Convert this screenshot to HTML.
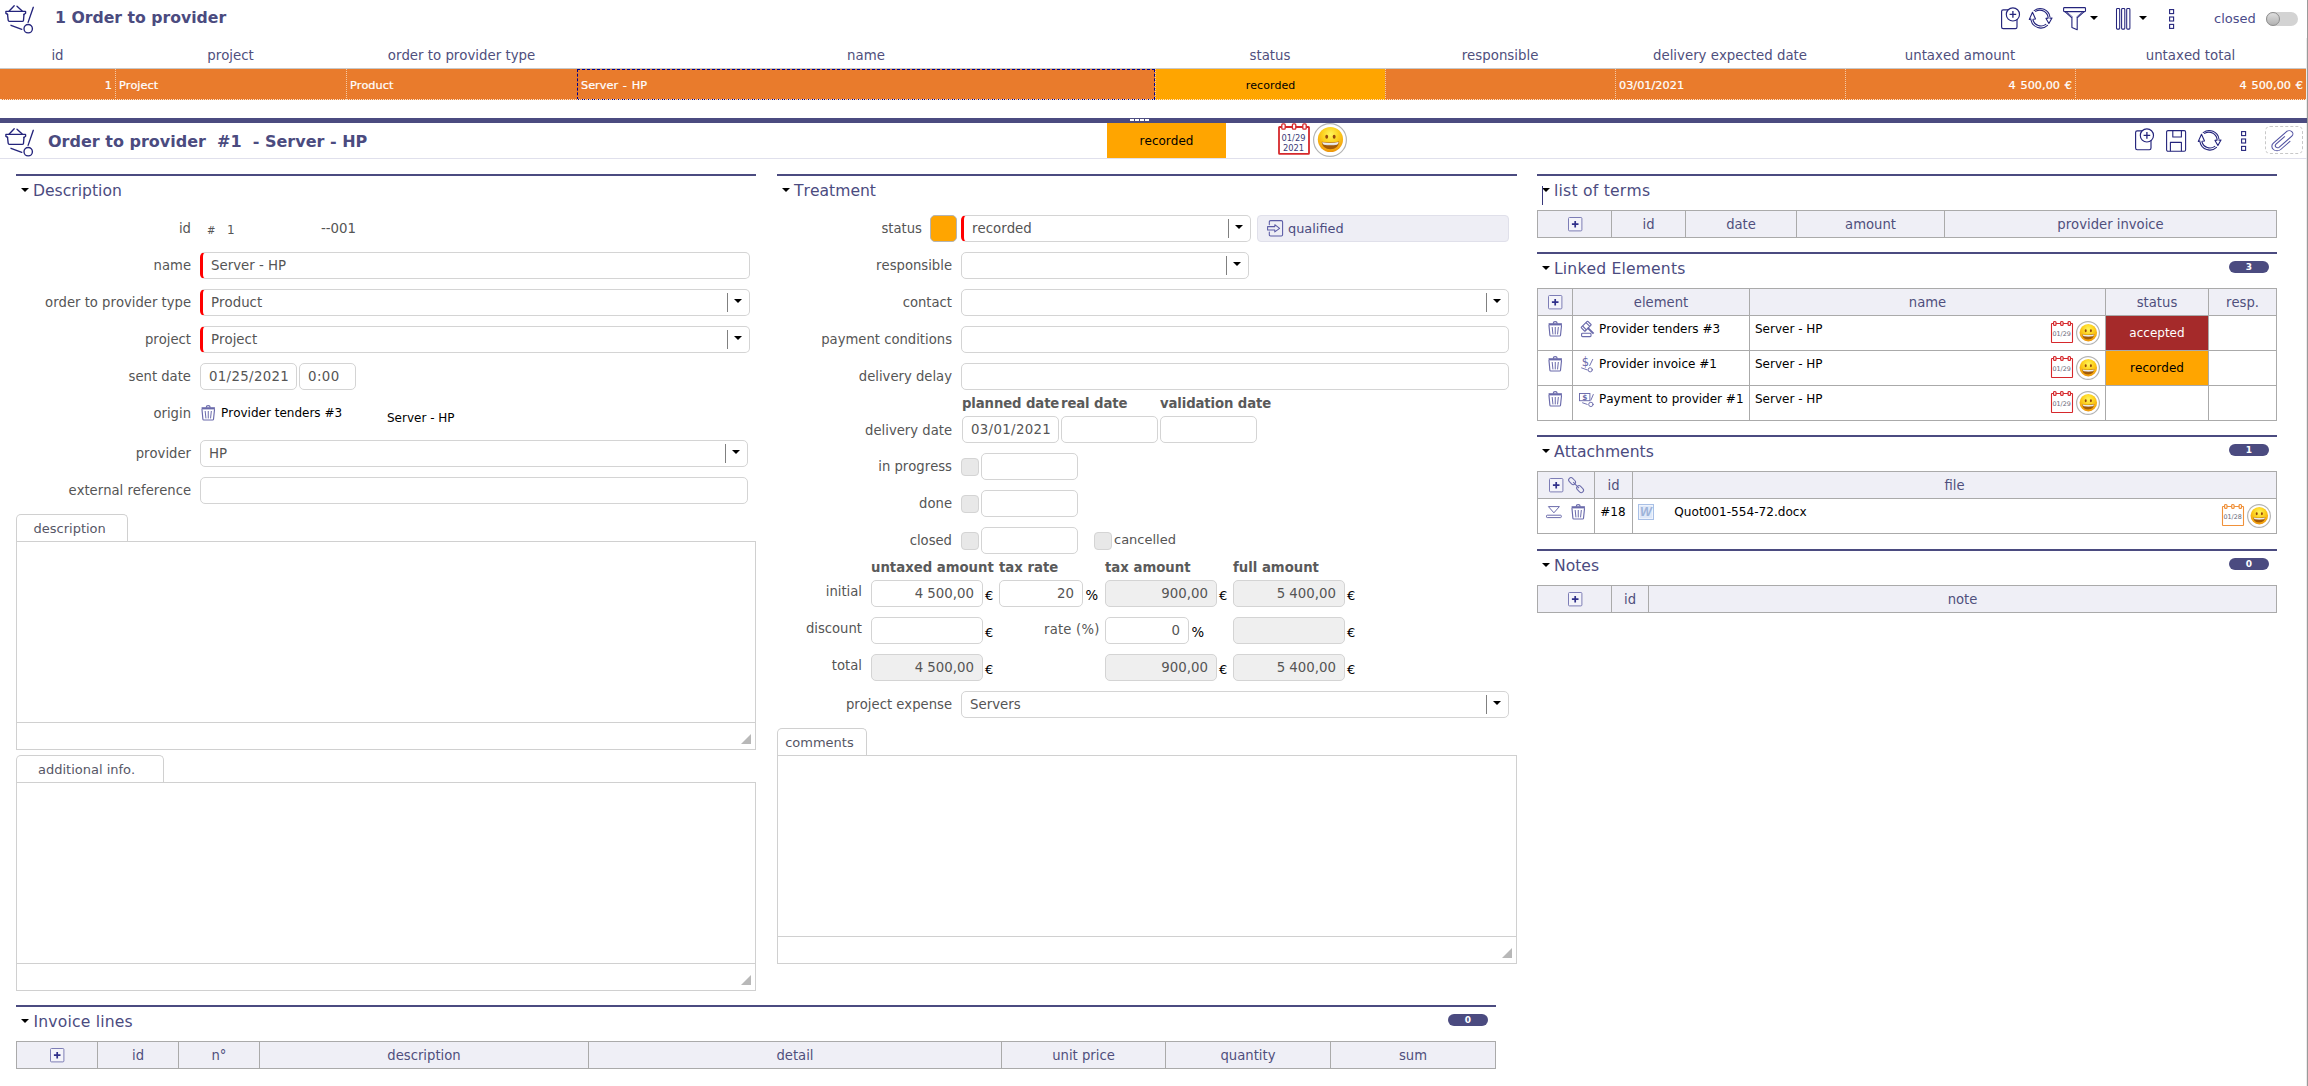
<!DOCTYPE html>
<html>
<head>
<meta charset="utf-8">
<title>Order to provider</title>
<style>
html,body{margin:0;padding:0;background:#fff;}
body{width:2308px;height:1086px;position:relative;overflow:hidden;font-family:"DejaVu Sans","Liberation Sans",sans-serif;font-size:13.33px;color:#555;font-kerning:none;}
.a{position:absolute;white-space:nowrap;}
.nv{color:#4b4b7f;}
svg{position:absolute;overflow:visible;}
/* list header */
.lh{top:47px;height:17px;line-height:17px;text-align:center;color:#4f4f7d;font-size:13.33px;}
.row{top:69px;height:31px;background:#e97b2c;}
.rc{top:69px;height:31px;line-height:33px;color:#fff;font-size:11.3px;font-weight:normal;-webkit-text-stroke:0.22px #fff;box-sizing:border-box;padding:0 3px 0 3px;word-spacing:1.2px;border-left:1px dotted #f3c9a6;}
/* sections */
.sl{height:2px;background:#4b4b80;}
.st{font-size:15.6px;color:#4b4b7f;height:20px;line-height:20px;margin-top:1px;}
.tri{width:0;height:0;border-left:4.2px solid transparent;border-right:4.2px solid transparent;border-top:4.6px solid #000;margin-left:-0.5px;}
.lb{text-align:right;height:18px;line-height:18px;color:#555;margin-top:1.4px;font-size:13.2px;}
.in{box-sizing:border-box;border:1px solid #d4d4d4;border-radius:5px;background:#fff;height:27px;line-height:25px;padding-left:8px;color:#555;}
.rq{border-left:3px solid #f00;padding-left:8px;}
.ro{background:#efefef;}
.num{text-align:right;padding-right:8px;padding-left:0;}
.sep{width:1px;background:#808080;height:19px;}
.cb{box-sizing:border-box;width:18px;height:18px;border:1px solid #d4d4d4;border-radius:4px;background:#e8e8e8;}
.bh{font-weight:bold;font-size:13.25px;color:#5a5a5a;}
.th{box-sizing:border-box;background:#efeff6;border:1px solid #aaa;height:28px;line-height:28px;font-size:13.2px;text-align:center;color:#4f4f7d;margin-left:-1px;}
.td{box-sizing:border-box;background:#fff;border:1px solid #aaa;margin-left:-1px;margin-top:-1px;color:#000;font-size:12px;}
.bd{background:#4b4b80;color:#fff;border-radius:6px;height:12px;line-height:12px;width:40px;text-align:center;font-size:9px;font-weight:bold;}
.tab{box-sizing:border-box;border:1px solid #d0d0d0;border-bottom:none;border-radius:5px 5px 0 0;background:#fff;height:27px;line-height:27px;text-align:left;color:#565666;font-size:13px;}
.ta{box-sizing:border-box;border:1px solid #d0d0d0;background:#fff;}
.tal{height:1px;background:#d0d0d0;}
.rt{font-size:12px;color:#000;height:16px;line-height:16px;margin-top:1px;}
.eu{color:#000;font-size:13px;height:16px;line-height:16px;}
.pc{font-size:13.3px;}
</style>
</head>
<body>
<div class="a" style="left:2306px;top:38px;width:1px;height:1048px;background:#ebebeb;"></div>
<!-- ===== LIST HEADER ===== -->
<div class="a" style="left:55px;top:7px;height:22px;line-height:22px;font-size:15.7px;font-weight:bold;color:#4b4b7f;">1 Order to provider</div>
<div class="a nv" style="left:2214px;top:9.6px;height:18px;line-height:18px;font-size:13px;color:#4b4b8a;">closed</div>
<div class="a" style="left:2266px;top:12px;width:32px;height:14px;border-radius:7px;background:#d3d3d3;"></div>
<div class="a" style="left:2266px;top:12px;width:14px;height:14px;border-radius:7px;box-sizing:border-box;border:1px solid #8e8e8e;background:linear-gradient(#dedede,#b2b2b2);"></div>

<div class="a lh" style="left:0;width:115px;">id</div>
<div class="a lh" style="left:115px;width:231px;">project</div>
<div class="a lh" style="left:346px;width:231px;">order to provider type</div>
<div class="a lh" style="left:577px;width:578px;">name</div>
<div class="a lh" style="left:1155px;width:230px;">status</div>
<div class="a lh" style="left:1385px;width:230px;">responsible</div>
<div class="a lh" style="left:1615px;width:230px;">delivery expected date</div>
<div class="a lh" style="left:1845px;width:230px;">untaxed amount</div>
<div class="a lh" style="left:2075px;width:231px;">untaxed total</div>

<div class="a" style="left:0;top:68px;width:2306px;height:1px;background:#c8c8c8;"></div>
<div class="a row" style="left:0;width:2306px;"></div>
<div class="a rc" style="left:0;width:115px;text-align:right;border-left:none;">1</div>
<div class="a rc" style="left:115px;width:231px;">Project</div>
<div class="a rc" style="left:346px;width:231px;">Product</div>
<div class="a rc" style="left:577px;width:578px;border:1px dashed #00008b;padding-left:3px;line-height:31px;">Server - HP</div>
<div class="a rc" style="left:1155px;width:230px;background:#ffa500;color:#000;font-weight:normal;-webkit-text-stroke:0;text-align:center;font-size:11px;">recorded</div>
<div class="a rc" style="left:1385px;width:230px;"></div>
<div class="a rc" style="left:1615px;width:230px;">03/01/2021</div>
<div class="a rc" style="left:1845px;width:230px;text-align:right;">4 500,00 €</div>
<div class="a rc" style="left:2075px;width:231px;text-align:right;">4 500,00 €</div>
<div class="a" style="left:0;top:99px;width:2306px;height:0;border-top:1px dotted #fbe6d3;"></div>

<!-- splitter -->
<div class="a" style="left:0;top:118px;width:2307px;height:5px;background:#4b4b80;"></div>
<div class="a" style="left:1130px;top:119px;width:20px;height:2px;background:repeating-linear-gradient(90deg,#fff 0,#fff 4px,transparent 4px,transparent 5px);"></div>

<!-- ===== DETAIL HEADER ===== -->
<div class="a" style="left:48px;top:130.6px;height:22px;line-height:22px;font-size:16px;font-weight:bold;color:#4b4b7f;white-space:pre;">Order to provider  #1  - Server - HP</div>
<div class="a" style="left:1107px;top:123px;width:119px;height:35px;line-height:37px;background:#ffa500;color:#000;text-align:center;font-size:12px;">recorded</div>
<div class="a" style="left:0;top:158px;width:2307px;height:1px;background:#e0e0ec;"></div>
<div class="a" style="left:2265px;top:126px;width:38px;height:28px;border:1px dashed #c8c8c8;border-radius:5px;box-sizing:border-box;"></div>

<!-- right edge -->
<div class="a" style="left:2307px;top:0;width:1px;height:1086px;background:#9a9a9a;"></div>

<!--COL1-->
<!-- ===== COLUMN 1 : Description ===== -->
<div class="a sl" style="left:16px;top:174px;width:740px;"></div>
<div class="a tri" style="left:21px;top:188px;"></div>
<div class="a st" style="left:33px;top:180px;">Description</div>

<div class="a lb" style="left:0;width:191px;top:219px;">id</div>
<div class="a" style="left:207px;top:221.7px;height:18px;line-height:18px;font-size:10px;color:#555;">#</div>
<div class="a" style="left:227px;top:220.7px;height:18px;line-height:18px;font-size:12px;color:#555;">1</div>
<div class="a" style="left:321px;top:220px;height:18px;line-height:18px;font-size:13.33px;color:#555;">--001</div>

<div class="a lb" style="left:0;width:191px;top:256px;">name</div>
<div class="a in rq" style="left:200px;top:252px;width:550px;">Server - HP</div>

<div class="a lb" style="left:0;width:191px;top:293px;">order to provider type</div>
<div class="a in rq" style="left:200px;top:289px;width:550px;">Product</div>
<div class="a sep" style="left:727px;top:293px;"></div>
<div class="a tri" style="left:734px;top:299px;"></div>

<div class="a lb" style="left:0;width:191px;top:330px;">project</div>
<div class="a in rq" style="left:200px;top:326px;width:550px;">Project</div>
<div class="a sep" style="left:727px;top:330px;"></div>
<div class="a tri" style="left:734px;top:336px;"></div>

<div class="a lb" style="left:0;width:191px;top:367px;">sent date</div>
<div class="a in" style="left:200px;top:363px;width:97px;letter-spacing:0.33px;">01/25/2021</div>
<div class="a in" style="left:299px;top:363px;width:57px;letter-spacing:0.4px;">0:00</div>

<div class="a lb" style="left:0;width:191px;top:404px;">origin</div>
<div class="a" style="left:221px;top:405px;height:16px;line-height:16px;font-size:12px;color:#000;">Provider tenders #3</div>
<div class="a" style="left:387px;top:410px;height:16px;line-height:16px;font-size:12px;color:#000;">Server - HP</div>

<div class="a lb" style="left:0;width:191px;top:444px;">provider</div>
<div class="a in" style="left:200px;top:440px;width:548px;">HP</div>
<div class="a sep" style="left:725px;top:444px;"></div>
<div class="a tri" style="left:732px;top:450px;"></div>

<div class="a lb" style="left:0;width:191px;top:481px;">external reference</div>
<div class="a in" style="left:200px;top:477px;width:548px;"></div>

<div class="a ta" style="left:16px;top:541px;width:740px;height:209px;"></div>
<div class="a tal" style="left:17px;top:722px;width:738px;"></div>
<div class="a tab" style="left:16px;top:514px;width:112px;padding-left:16.5px;">description</div>
<div class="a" style="left:742px;top:735px;width:0;height:0;border-left:10px solid transparent;border-bottom:10px solid #b8b8b8;margin-left:-1px;margin-top:-1px;"></div>

<div class="a ta" style="left:16px;top:782px;width:740px;height:209px;"></div>
<div class="a tal" style="left:17px;top:963px;width:738px;"></div>
<div class="a tab" style="left:16px;top:755px;width:148px;padding-left:21px;">additional info.</div>
<div class="a" style="left:742px;top:976px;width:0;height:0;border-left:10px solid transparent;border-bottom:10px solid #b8b8b8;margin-left:-1px;margin-top:-1px;"></div>
<!--/COL1-->
<!--COL2-->
<!-- ===== COLUMN 2 : Treatment ===== -->
<div class="a sl" style="left:777px;top:174px;width:740px;"></div>
<div class="a tri" style="left:782px;top:188px;"></div>
<div class="a st" style="left:794px;top:180px;">Treatment</div>

<div class="a lb" style="left:770px;width:152px;top:219px;">status</div>
<div class="a" style="left:930px;top:215px;width:27px;height:27px;box-sizing:border-box;border:1px solid #b4b4b4;border-radius:5px;background:#ffa500;"></div>
<div class="a in rq" style="left:961px;top:215px;width:290px;">recorded</div>
<div class="a sep" style="left:1228px;top:219px;"></div>
<div class="a tri" style="left:1235px;top:225px;"></div>
<div class="a" style="left:1257px;top:215px;width:252px;height:27px;box-sizing:border-box;border:1px solid #e0e0ea;border-radius:4px;background:#eeeef5;"></div>
<div class="a" style="left:1288px;top:219.5px;height:18px;line-height:18px;color:#4b4b7f;font-size:12.9px;">qualified</div>

<div class="a lb" style="left:770px;width:182px;top:256px;">responsible</div>
<div class="a in" style="left:961px;top:252px;width:288px;"></div>
<div class="a sep" style="left:1226px;top:256px;"></div>
<div class="a tri" style="left:1233px;top:262px;"></div>

<div class="a lb" style="left:770px;width:182px;top:293px;">contact</div>
<div class="a in" style="left:961px;top:289px;width:548px;"></div>
<div class="a sep" style="left:1486px;top:293px;"></div>
<div class="a tri" style="left:1493px;top:299px;"></div>

<div class="a lb" style="left:770px;width:182px;top:330px;">payment conditions</div>
<div class="a in" style="left:961px;top:326px;width:548px;"></div>

<div class="a lb" style="left:770px;width:182px;top:367px;">delivery delay</div>
<div class="a in" style="left:961px;top:363px;width:548px;"></div>

<div class="a bh" style="left:962px;top:396px;height:16px;line-height:16px;letter-spacing:-0.12px;">planned date</div>
<div class="a bh" style="left:1061px;top:396px;height:16px;line-height:16px;letter-spacing:-0.12px;">real date</div>
<div class="a bh" style="left:1160px;top:396px;height:16px;line-height:16px;letter-spacing:-0.12px;">validation date</div>

<div class="a lb" style="left:770px;width:182px;top:421px;">delivery date</div>
<div class="a in" style="left:962px;top:416px;width:97px;letter-spacing:0.33px;">03/01/2021</div>
<div class="a in" style="left:1061px;top:416px;width:97px;"></div>
<div class="a in" style="left:1160px;top:416px;width:97px;"></div>

<div class="a lb" style="left:770px;width:182px;top:457px;">in progress</div>
<div class="a cb" style="left:961px;top:458px;"></div>
<div class="a in" style="left:981px;top:453px;width:97px;"></div>

<div class="a lb" style="left:770px;width:182px;top:494px;">done</div>
<div class="a cb" style="left:961px;top:495px;"></div>
<div class="a in" style="left:981px;top:490px;width:97px;"></div>

<div class="a lb" style="left:770px;width:182px;top:531px;">closed</div>
<div class="a cb" style="left:961px;top:532px;"></div>
<div class="a in" style="left:981px;top:527px;width:97px;"></div>
<div class="a cb" style="left:1094px;top:532px;"></div>
<div class="a" style="left:1114px;top:531.3px;height:18px;line-height:18px;color:#555;font-size:13px;">cancelled</div>

<div class="a bh" style="left:871px;top:560px;height:16px;line-height:16px;">untaxed amount</div>
<div class="a bh" style="left:999px;top:560px;height:16px;line-height:16px;">tax rate</div>
<div class="a bh" style="left:1105px;top:560px;height:16px;line-height:16px;">tax amount</div>
<div class="a bh" style="left:1233px;top:560px;height:16px;line-height:16px;">full amount</div>

<div class="a lb" style="left:770px;width:92px;top:582px;">initial</div>
<div class="a in num" style="left:871px;top:580px;width:112px;">4 500,00</div>
<div class="a eu" style="left:985px;top:588px;">€</div>
<div class="a in num" style="left:999px;top:580px;width:84px;">20</div>
<div class="a eu pc" style="left:1085.5px;top:588px;">%</div>
<div class="a in num ro" style="left:1105px;top:580px;width:112px;">900,00</div>
<div class="a eu" style="left:1219px;top:588px;">€</div>
<div class="a in num ro" style="left:1233px;top:580px;width:112px;">5 400,00</div>
<div class="a eu" style="left:1347px;top:588px;">€</div>

<div class="a lb" style="left:770px;width:92px;top:619px;">discount</div>
<div class="a in num" style="left:871px;top:617px;width:112px;"></div>
<div class="a eu" style="left:985px;top:625px;">€</div>
<div class="a lb" style="left:1000px;width:99.5px;top:620px;letter-spacing:0.2px;">rate (%)</div>
<div class="a in num" style="left:1105px;top:617px;width:84px;">0</div>
<div class="a eu pc" style="left:1191.5px;top:625px;">%</div>
<div class="a in num ro" style="left:1233px;top:617px;width:112px;"></div>
<div class="a eu" style="left:1347px;top:625px;">€</div>

<div class="a lb" style="left:770px;width:92px;top:656px;">total</div>
<div class="a in num ro" style="left:871px;top:654px;width:112px;">4 500,00</div>
<div class="a eu" style="left:985px;top:662px;">€</div>
<div class="a in num ro" style="left:1105px;top:654px;width:112px;">900,00</div>
<div class="a eu" style="left:1219px;top:662px;">€</div>
<div class="a in num ro" style="left:1233px;top:654px;width:112px;">5 400,00</div>
<div class="a eu" style="left:1347px;top:662px;">€</div>

<div class="a lb" style="left:770px;width:182px;top:695px;">project expense</div>
<div class="a in" style="left:961px;top:691px;width:548px;">Servers</div>
<div class="a sep" style="left:1486px;top:695px;"></div>
<div class="a tri" style="left:1493px;top:701px;"></div>

<div class="a ta" style="left:777px;top:755px;width:740px;height:209px;"></div>
<div class="a tal" style="left:778px;top:936px;width:738px;"></div>
<div class="a tab" style="left:777px;top:728px;width:90px;padding-left:7.2px;">comments</div>
<div class="a" style="left:1503px;top:949px;width:0;height:0;border-left:10px solid transparent;border-bottom:10px solid #b8b8b8;margin-left:-1px;margin-top:-1px;"></div>
<!--/COL2-->
<!--COL3-->
<!-- ===== COLUMN 3 ===== -->
<div class="a sl" style="left:1537px;top:174px;width:740px;"></div>
<div class="a tri" style="left:1542.2px;top:188px;"></div>
<div class="a" style="left:1542px;top:186px;width:1px;height:19px;background:#38387a;"></div>
<div class="a st" style="left:1554px;top:180px;letter-spacing:0.23px;">list of terms</div>
<div class="a th" style="left:1537px;top:210px;width:76px;margin-left:0;"></div>
<div class="a th" style="left:1612px;top:210px;width:75px;">id</div>
<div class="a th" style="left:1686px;top:210px;width:112px;">date</div>
<div class="a th" style="left:1797px;top:210px;width:149px;">amount</div>
<div class="a th" style="left:1945px;top:210px;width:333px;">provider invoice</div>

<div class="a sl" style="left:1537px;top:252px;width:740px;"></div>
<div class="a tri" style="left:1542.2px;top:266px;"></div>
<div class="a st" style="left:1554px;top:258px;letter-spacing:0.16px;">Linked Elements</div>
<div class="a bd" style="left:2229px;top:261px;">3</div>

<div class="a th" style="left:1537px;top:288px;width:37px;margin-left:0;"></div>
<div class="a th" style="left:1573px;top:288px;width:178px;">element</div>
<div class="a th" style="left:1750px;top:288px;width:357px;">name</div>
<div class="a th" style="left:2106px;top:288px;width:104px;">status</div>
<div class="a th" style="left:2209px;top:288px;width:69px;">resp.</div>

<div class="a td" style="left:1537px;top:316px;width:37px;height:36px;margin-left:0;"></div>
<div class="a td" style="left:1573px;top:316px;width:178px;height:36px;"></div>
<div class="a td" style="left:1750px;top:316px;width:357px;height:36px;"></div>
<div class="a td" style="left:2106px;top:316px;width:104px;height:36px;"></div>
<div class="a td" style="left:2209px;top:316px;width:69px;height:36px;"></div>
<div class="a td" style="left:1537px;top:351px;width:37px;height:36px;margin-left:0;"></div>
<div class="a td" style="left:1573px;top:351px;width:178px;height:36px;"></div>
<div class="a td" style="left:1750px;top:351px;width:357px;height:36px;"></div>
<div class="a td" style="left:2106px;top:351px;width:104px;height:36px;"></div>
<div class="a td" style="left:2209px;top:351px;width:69px;height:36px;"></div>
<div class="a td" style="left:1537px;top:386px;width:37px;height:36px;margin-left:0;"></div>
<div class="a td" style="left:1573px;top:386px;width:178px;height:36px;"></div>
<div class="a td" style="left:1750px;top:386px;width:357px;height:36px;"></div>
<div class="a td" style="left:2106px;top:386px;width:104px;height:36px;"></div>
<div class="a td" style="left:2209px;top:386px;width:69px;height:36px;"></div>

<div class="a" style="left:2106px;top:316px;width:102px;height:34px;line-height:34px;background:#a52a2a;color:#fff;text-align:center;font-size:12px;">accepted</div>
<div class="a" style="left:2106px;top:351px;width:102px;height:34px;line-height:34px;background:#ffa500;color:#000;text-align:center;font-size:12px;">recorded</div>

<div class="a rt" style="left:1599px;top:320px;">Provider tenders #3</div>
<div class="a rt" style="left:1599px;top:355px;">Provider invoice #1</div>
<div class="a rt" style="left:1599px;top:390px;">Payment to provider #1</div>
<div class="a rt" style="left:1755px;top:320px;">Server - HP</div>
<div class="a rt" style="left:1755px;top:355px;">Server - HP</div>
<div class="a rt" style="left:1755px;top:390px;">Server - HP</div>

<div class="a sl" style="left:1537px;top:435px;width:740px;"></div>
<div class="a tri" style="left:1542.2px;top:449px;"></div>
<div class="a st" style="left:1554px;top:441px;">Attachments</div>
<div class="a bd" style="left:2229px;top:444px;">1</div>

<div class="a th" style="left:1537px;top:471px;width:59px;margin-left:0;"></div>
<div class="a th" style="left:1595px;top:471px;width:39px;">id</div>
<div class="a th" style="left:1633px;top:471px;width:645px;">file</div>
<div class="a td" style="left:1537px;top:499px;width:59px;height:36px;margin-left:0;"></div>
<div class="a td" style="left:1595px;top:499px;width:39px;height:36px;"></div>
<div class="a td" style="left:1633px;top:499px;width:645px;height:36px;"></div>
<div class="a rt" style="left:1600.3px;top:503px;">#18</div>
<div class="a rt" style="left:1674.3px;top:503px;font-size:12.1px;">Quot001-554-72.docx</div>

<div class="a sl" style="left:1537px;top:549px;width:740px;"></div>
<div class="a tri" style="left:1542.2px;top:563px;"></div>
<div class="a st" style="left:1554px;top:555px;">Notes</div>
<div class="a bd" style="left:2229px;top:558px;">0</div>
<div class="a th" style="left:1537px;top:585px;width:76px;margin-left:0;"></div>
<div class="a th" style="left:1612px;top:585px;width:38px;">id</div>
<div class="a th" style="left:1649px;top:585px;width:629px;">note</div>
<!--/COL3-->
<!--BOTTOM-->
<!-- ===== Invoice lines ===== -->
<div class="a sl" style="left:16px;top:1005px;width:1480px;"></div>
<div class="a tri" style="left:21px;top:1019px;"></div>
<div class="a st" style="left:33.5px;top:1011px;letter-spacing:0.18px;">Invoice lines</div>
<div class="a bd" style="left:1448px;top:1014px;">0</div>
<div class="a th" style="left:16px;top:1041px;width:82px;margin-left:0;"></div>
<div class="a th" style="left:98px;top:1041px;width:82px;">id</div>
<div class="a th" style="left:179px;top:1041px;width:82px;">n°</div>
<div class="a th" style="left:260px;top:1041px;width:330px;">description</div>
<div class="a th" style="left:589px;top:1041px;width:414px;">detail</div>
<div class="a th" style="left:1002px;top:1041px;width:165px;">unit price</div>
<div class="a th" style="left:1166px;top:1041px;width:166px;">quantity</div>
<div class="a th" style="left:1331px;top:1041px;width:166px;">sum</div>
<!--/BOTTOM-->
<!--ICONS-->
<!-- ===== ICONS ===== -->
<svg style="left:4.6px;top:5px" width="34" height="30" viewBox="0 0 34 30" ><g fill="none" stroke="#24247c" stroke-width="1.35" stroke-linecap="round" stroke-linejoin="round"><path d="M4.2 6 L9.2 0.8 M12 1.2 L17.2 6"/><path d="M0.9 6.3 H20.4 M0.9 6.3 V8.4 L2.6 9.3 M20.6 6.6 V8.2 L18.9 9.5"/><path d="M2.5 9.2 L3.2 15.3 Q3.3 16.4 4.4 16.4 H17.2 Q18.3 16.4 18.5 15.3 L19 9.3"/><path d="M28.3 2.3 L23.1 17.4"/><path d="M6 20.3 L16.8 24.3"/><circle cx="23.2" cy="23.7" r="4.2"/></g></svg>
<svg style="left:4.6px;top:127.7px" width="34" height="30" viewBox="0 0 34 30" ><g fill="none" stroke="#24247c" stroke-width="1.35" stroke-linecap="round" stroke-linejoin="round"><path d="M4.2 6 L9.2 0.8 M12 1.2 L17.2 6"/><path d="M0.9 6.3 H20.4 M0.9 6.3 V8.4 L2.6 9.3 M20.6 6.6 V8.2 L18.9 9.5"/><path d="M2.5 9.2 L3.2 15.3 Q3.3 16.4 4.4 16.4 H17.2 Q18.3 16.4 18.5 15.3 L19 9.3"/><path d="M28.3 2.3 L23.1 17.4"/><path d="M6 20.3 L16.8 24.3"/><circle cx="23.2" cy="23.7" r="4.2"/></g></svg>
<svg style="left:2000.6px;top:6.5px" width="20" height="24" viewBox="0 0 20 24" ><g fill="none" stroke="#24247c" stroke-width="1.15" stroke-linejoin="round"><rect x="0.6" y="2.8" width="15.4" height="18.9" rx="1.6"/><circle cx="11.9" cy="7.4" r="6.6" fill="#fff"/><path d="M8.6 7.4 H15.2 M11.9 4.1 V10.7" stroke-width="1.3"/></g></svg>
<svg style="left:2134.7px;top:128.4px" width="20" height="24" viewBox="0 0 20 24" ><g fill="none" stroke="#24247c" stroke-width="1.15" stroke-linejoin="round"><rect x="0.6" y="2.8" width="15.4" height="18.9" rx="1.6"/><circle cx="11.9" cy="7.4" r="6.6" fill="#fff"/><path d="M8.6 7.4 H15.2 M11.9 4.1 V10.7" stroke-width="1.3"/></g></svg>
<svg style="left:2029px;top:7.3px" width="24" height="22" viewBox="0 0 24 22" ><g fill="none" stroke="#24247c" stroke-width="1.1" stroke-linejoin="round" stroke-linecap="round"><path d="M5.2 3.6 A9.9 9.9 0 0 1 21.0 10.2"/><path d="M6.6 4.4 A8.3 8.3 0 0 1 19.1 10.4"/><path d="M17.0 11.4 L19.9 16.6 L23.0 11.0 L21.0 11.3 M17.0 11.4 L19.1 11.1"/><path d="M18.5 18.3 A9.9 9.9 0 0 1 2.0 13.2"/><path d="M16.8 17.4 A8.3 8.3 0 0 1 4.0 13.0"/><path d="M6.5 12.0 L3.5 5.2 L0.3 12.4 L2.0 12.1 M6.5 12.0 L4.0 12.2"/></g></svg>
<svg style="left:2198.4px;top:129.3px" width="24" height="22" viewBox="0 0 24 22" ><g fill="none" stroke="#24247c" stroke-width="1.1" stroke-linejoin="round" stroke-linecap="round"><path d="M5.2 3.6 A9.9 9.9 0 0 1 21.0 10.2"/><path d="M6.6 4.4 A8.3 8.3 0 0 1 19.1 10.4"/><path d="M17.0 11.4 L19.9 16.6 L23.0 11.0 L21.0 11.3 M17.0 11.4 L19.1 11.1"/><path d="M18.5 18.3 A9.9 9.9 0 0 1 2.0 13.2"/><path d="M16.8 17.4 A8.3 8.3 0 0 1 4.0 13.0"/><path d="M6.5 12.0 L3.5 5.2 L0.3 12.4 L2.0 12.1 M6.5 12.0 L4.0 12.2"/></g></svg>
<svg style="left:2062.5px;top:6.7px" width="24" height="24" viewBox="0 0 24 24" ><g fill="none" stroke="#24247c" stroke-width="1.1" stroke-linejoin="round"><rect x="0.6" y="0.6" width="21.9" height="4.0" rx="0.8"/><path d="M2.2 4.8 L8.9 10.8 V20.4 L14.2 22.8 V10.8 L20.9 4.8"/><path d="M3.6 4.8 L9.9 10.3 M19.5 4.8 L13.3 10.3" stroke-width="0.7"/></g></svg>
<div class="a" style="left:2089.5px;top:16px;width:0;height:0;border-left:4.2px solid transparent;border-right:4.2px solid transparent;border-top:4.6px solid #000;"></div>
<svg style="left:2115.5px;top:8px" width="15" height="22" viewBox="0 0 15 22" ><g fill="none" stroke="#24247c" stroke-width="1.05"><rect x="0.5" y="0.5" width="3.2" height="20.6" rx="0.9"/><rect x="5.6" y="0.5" width="3.2" height="20.6" rx="0.9"/><rect x="10.7" y="0.5" width="3.2" height="20.6" rx="0.9"/></g></svg>
<div class="a" style="left:2138.5px;top:16px;width:0;height:0;border-left:4.2px solid transparent;border-right:4.2px solid transparent;border-top:4.6px solid #000;"></div>
<svg style="left:2169px;top:9.2px" width="6" height="21" viewBox="0 0 6 21" ><g fill="none" stroke="#24247c" stroke-width="1.1"><rect x="0.6" y="0.6" width="4" height="4"/><rect x="0.6" y="8" width="4" height="4"/><rect x="0.6" y="15.4" width="4" height="4"/></g></svg>
<svg style="left:2241px;top:130.8px" width="6" height="21" viewBox="0 0 6 21" ><g fill="none" stroke="#24247c" stroke-width="1.1"><rect x="0.6" y="0.6" width="4" height="4"/><rect x="0.6" y="8" width="4" height="4"/><rect x="0.6" y="15.4" width="4" height="4"/></g></svg>
<svg style="left:2166px;top:130px" width="21" height="22" viewBox="0 0 21 22" ><g fill="none" stroke="#24247c" stroke-width="1.1" stroke-linejoin="round"><rect x="0.6" y="0.6" width="19" height="20.6" rx="1.4"/><path d="M6.8 0.6 V7 H15.4 V0.6"/><path d="M4.4 21.2 V12.4 H15.4 V21.2"/></g></svg>
<svg style="left:2270.5px;top:128.5px" width="24" height="24" viewBox="0 0 24 24" ><g fill="none" stroke="#5252a2" stroke-width="1.05" stroke-linecap="round" stroke-linejoin="round"><path d="M13.2 7.2 L4.6 15.8 A2.3 2.3 0 0 0 7.8 19 L20.2 6.6 A3.6 3.6 0 0 0 15.1 1.5 L2.3 14.3 A5 5 0 0 0 9.4 21.4 L18.4 12.4" transform="translate(0,1.2) scale(1.03,0.9)"/></g></svg>
<svg style="left:1568px;top:217px" width="15" height="15" viewBox="0 0 15 15" ><rect x="0.5" y="0.5" width="13.4" height="13.4" rx="1" fill="#f4f4fa" stroke="#7d7db6" stroke-width="1"/><path d="M3.9 7.2 H10.5 M7.2 3.9 V10.5" stroke="#30308a" stroke-width="1.7" fill="none"/></svg>
<svg style="left:1548px;top:295px" width="15" height="15" viewBox="0 0 15 15" ><rect x="0.5" y="0.5" width="13.4" height="13.4" rx="1" fill="#f4f4fa" stroke="#7d7db6" stroke-width="1"/><path d="M3.9 7.2 H10.5 M7.2 3.9 V10.5" stroke="#30308a" stroke-width="1.7" fill="none"/></svg>
<svg style="left:1548.6px;top:477.8px" width="15" height="15" viewBox="0 0 15 15" ><rect x="0.5" y="0.5" width="13.4" height="13.4" rx="1" fill="#f4f4fa" stroke="#7d7db6" stroke-width="1"/><path d="M3.9 7.2 H10.5 M7.2 3.9 V10.5" stroke="#30308a" stroke-width="1.7" fill="none"/></svg>
<svg style="left:1568px;top:592px" width="15" height="15" viewBox="0 0 15 15" ><rect x="0.5" y="0.5" width="13.4" height="13.4" rx="1" fill="#f4f4fa" stroke="#7d7db6" stroke-width="1"/><path d="M3.9 7.2 H10.5 M7.2 3.9 V10.5" stroke="#30308a" stroke-width="1.7" fill="none"/></svg>
<svg style="left:50px;top:1048px" width="15" height="15" viewBox="0 0 15 15" ><rect x="0.5" y="0.5" width="13.4" height="13.4" rx="1" fill="#f4f4fa" stroke="#7d7db6" stroke-width="1"/><path d="M3.9 7.2 H10.5 M7.2 3.9 V10.5" stroke="#30308a" stroke-width="1.7" fill="none"/></svg>
<svg style="left:1548px;top:321px" width="15" height="16" viewBox="0 0 15 16" ><g fill="none" stroke="#6a6aab" stroke-linecap="round" stroke-linejoin="round"><path d="M5.3 2.2 Q5.3 0.6 7.2 0.6 Q9.1 0.6 9.1 2.2" stroke-width="1.2"/><path d="M0.6 3.3 H13.9" stroke-width="2.2" stroke-linecap="butt"/><path d="M1 4.6 L1.9 14.2 Q2 15 2.8 15 H11.6 Q12.4 15 12.5 14.2 L13.5 4.6" stroke-width="1.15"/><path d="M4.2 6.4 L4.9 13 M7.25 6.4 V13 M10.3 6.4 L9.6 13" stroke-width="1"/></g></svg>
<svg style="left:1548px;top:356px" width="15" height="16" viewBox="0 0 15 16" ><g fill="none" stroke="#6a6aab" stroke-linecap="round" stroke-linejoin="round"><path d="M5.3 2.2 Q5.3 0.6 7.2 0.6 Q9.1 0.6 9.1 2.2" stroke-width="1.2"/><path d="M0.6 3.3 H13.9" stroke-width="2.2" stroke-linecap="butt"/><path d="M1 4.6 L1.9 14.2 Q2 15 2.8 15 H11.6 Q12.4 15 12.5 14.2 L13.5 4.6" stroke-width="1.15"/><path d="M4.2 6.4 L4.9 13 M7.25 6.4 V13 M10.3 6.4 L9.6 13" stroke-width="1"/></g></svg>
<svg style="left:1548px;top:391px" width="15" height="16" viewBox="0 0 15 16" ><g fill="none" stroke="#6a6aab" stroke-linecap="round" stroke-linejoin="round"><path d="M5.3 2.2 Q5.3 0.6 7.2 0.6 Q9.1 0.6 9.1 2.2" stroke-width="1.2"/><path d="M0.6 3.3 H13.9" stroke-width="2.2" stroke-linecap="butt"/><path d="M1 4.6 L1.9 14.2 Q2 15 2.8 15 H11.6 Q12.4 15 12.5 14.2 L13.5 4.6" stroke-width="1.15"/><path d="M4.2 6.4 L4.9 13 M7.25 6.4 V13 M10.3 6.4 L9.6 13" stroke-width="1"/></g></svg>
<svg style="left:1571px;top:504px" width="15" height="16" viewBox="0 0 15 16" ><g fill="none" stroke="#6a6aab" stroke-linecap="round" stroke-linejoin="round"><path d="M5.3 2.2 Q5.3 0.6 7.2 0.6 Q9.1 0.6 9.1 2.2" stroke-width="1.2"/><path d="M0.6 3.3 H13.9" stroke-width="2.2" stroke-linecap="butt"/><path d="M1 4.6 L1.9 14.2 Q2 15 2.8 15 H11.6 Q12.4 15 12.5 14.2 L13.5 4.6" stroke-width="1.15"/><path d="M4.2 6.4 L4.9 13 M7.25 6.4 V13 M10.3 6.4 L9.6 13" stroke-width="1"/></g></svg>
<svg style="left:201px;top:405px" width="15" height="16" viewBox="0 0 15 16" ><g fill="none" stroke="#6a6aab" stroke-linecap="round" stroke-linejoin="round"><path d="M5.3 2.2 Q5.3 0.6 7.2 0.6 Q9.1 0.6 9.1 2.2" stroke-width="1.2"/><path d="M0.6 3.3 H13.9" stroke-width="2.2" stroke-linecap="butt"/><path d="M1 4.6 L1.9 14.2 Q2 15 2.8 15 H11.6 Q12.4 15 12.5 14.2 L13.5 4.6" stroke-width="1.15"/><path d="M4.2 6.4 L4.9 13 M7.25 6.4 V13 M10.3 6.4 L9.6 13" stroke-width="1"/></g></svg>
<svg style="left:1579.6px;top:321px" width="16" height="17" viewBox="0 0 16 17" ><g fill="none" stroke="#6a6aab" stroke-width="1.1" stroke-linejoin="round"><g transform="translate(6.2,5.2) rotate(-45)"><rect x="-4.6" y="-2.7" width="9.2" height="5.4" rx="0.5"/><path d="M-2.4 -2.7 V2.7 M2.4 -2.7 V2.7"/></g><path d="M7.6 6.8 L13.6 12.6" stroke-width="1.9"/><rect x="1.6" y="12.2" width="9.4" height="3.4" rx="0.9"/></g></svg>
<svg style="left:1580.8px;top:356.8px" width="14" height="16" viewBox="0 0 14 16" ><g fill="none" stroke="#6a6aab" stroke-width="0.95" stroke-linecap="round"><path d="M11.7 2.4 L8.7 8.6"/><path d="M0.6 10.9 L6.2 12.9"/><circle cx="9.2" cy="12.8" r="2.1"/></g><text x="0.7" y="9.4" font-family="DejaVu Sans,sans-serif" font-size="11.5" fill="#6a6aab">$</text></svg>
<svg style="left:1578.8px;top:392.8px" width="16" height="15" viewBox="0 0 16 15" ><g fill="none" stroke="#6a6aab" stroke-width="0.95" stroke-linecap="round"><rect x="0.5" y="0.5" width="10.4" height="7.2"/><path d="M14.3 1.5 L11.9 7.2"/><path d="M3.6 9.8 L8.2 11.4"/><circle cx="11.9" cy="11.4" r="2.2"/></g><text x="3.3" y="7" font-family="DejaVu Sans,sans-serif" font-size="7.5" font-weight="bold" fill="#6a6aab">$</text></svg>
<svg style="left:1567.9px;top:476.8px" width="17" height="17" viewBox="0 0 17 17" ><g fill="none" stroke="#6a6aab" stroke-width="1.1" transform="translate(8.1,8.1) rotate(45) scale(0.9)"><rect x="-10.6" y="-2.6" width="8.6" height="5.2" rx="2.6"/><rect x="2" y="-2.6" width="8.6" height="5.2" rx="2.6"/><path d="M-4.6 0 H4.6"/></g></svg>
<svg style="left:1546.2px;top:506.2px" width="16" height="13" viewBox="0 0 16 13" ><g fill="none" stroke="#6a6aab" stroke-width="1" stroke-linejoin="round"><path d="M2.4 0.6 H13.4 L7.9 6.8 Z"/><rect x="0.5" y="9.2" width="14.8" height="2.4" rx="0.8"/></g></svg>
<svg style="left:1267.1px;top:219.7px" width="17" height="17" viewBox="0 0 17 17" ><g fill="none" stroke="#5a5aa5" stroke-width="1.05" stroke-linejoin="round" stroke-linecap="round"><path d="M2.3 4.6 V1.9 Q2.3 0.6 3.6 0.6 H14.3 Q15.6 0.6 15.6 1.9 V14.7 Q15.6 16 14.3 16 H3.6 Q2.3 16 2.3 14.7 V12"/><path d="M0.6 6.6 H7.8 V4.7 L12.6 8.3 L7.8 11.9 V10 H0.6 Z"/></g></svg>
<svg style="left:1638px;top:504px" width="16" height="16" viewBox="0 0 16 16" ><rect x="0.5" y="0.5" width="15" height="15" fill="#dfe8f8" stroke="#a9c0e6" stroke-width="1"/><rect x="1.5" y="1.5" width="13" height="13" fill="none" stroke="#eef3fc" stroke-width="1"/><text x="8" y="12.3" text-anchor="middle" font-family="Liberation Sans,sans-serif" font-style="italic" font-weight="bold" font-size="12.5" fill="#9db3d9">W</text></svg>
<svg style="left:2050px;top:320px" width="24" height="24" viewBox="0 0 24 24" ><rect x="1.5" y="3.5" width="21" height="19" rx="0.5" fill="#fff" stroke="#d6282c" stroke-width="1.1"/><rect x="3.5999999999999996" y="1.5" width="2.4" height="3.8" rx="0.9" fill="#fff" stroke="#d6282c" stroke-width="1.2"/><rect x="10.700000000000001" y="1.5" width="2.4" height="3.8" rx="0.9" fill="#fff" stroke="#d6282c" stroke-width="1.2"/><rect x="18.1" y="1.5" width="2.4" height="3.8" rx="0.9" fill="#fff" stroke="#d6282c" stroke-width="1.2"/><text x="11.6" y="15.9" text-anchor="middle" font-family="DejaVu Sans,sans-serif" font-size="6.4" fill="#666677">01/29</text></svg>
<svg style="left:2050px;top:355px" width="24" height="24" viewBox="0 0 24 24" ><rect x="1.5" y="3.5" width="21" height="19" rx="0.5" fill="#fff" stroke="#d6282c" stroke-width="1.1"/><rect x="3.5999999999999996" y="1.5" width="2.4" height="3.8" rx="0.9" fill="#fff" stroke="#d6282c" stroke-width="1.2"/><rect x="10.700000000000001" y="1.5" width="2.4" height="3.8" rx="0.9" fill="#fff" stroke="#d6282c" stroke-width="1.2"/><rect x="18.1" y="1.5" width="2.4" height="3.8" rx="0.9" fill="#fff" stroke="#d6282c" stroke-width="1.2"/><text x="11.6" y="15.9" text-anchor="middle" font-family="DejaVu Sans,sans-serif" font-size="6.4" fill="#666677">01/29</text></svg>
<svg style="left:2050px;top:390px" width="24" height="24" viewBox="0 0 24 24" ><rect x="1.5" y="3.5" width="21" height="19" rx="0.5" fill="#fff" stroke="#d6282c" stroke-width="1.1"/><rect x="3.5999999999999996" y="1.5" width="2.4" height="3.8" rx="0.9" fill="#fff" stroke="#d6282c" stroke-width="1.2"/><rect x="10.700000000000001" y="1.5" width="2.4" height="3.8" rx="0.9" fill="#fff" stroke="#d6282c" stroke-width="1.2"/><rect x="18.1" y="1.5" width="2.4" height="3.8" rx="0.9" fill="#fff" stroke="#d6282c" stroke-width="1.2"/><text x="11.6" y="15.9" text-anchor="middle" font-family="DejaVu Sans,sans-serif" font-size="6.4" fill="#666677">01/29</text></svg>
<svg style="left:2221px;top:503px" width="24" height="24" viewBox="0 0 24 24" ><rect x="1.5" y="3.5" width="21" height="19" rx="0.5" fill="#fff" stroke="#f0913a" stroke-width="1.1"/><rect x="3.5999999999999996" y="1.5" width="2.4" height="3.8" rx="0.9" fill="#fff" stroke="#f0913a" stroke-width="1.2"/><rect x="10.700000000000001" y="1.5" width="2.4" height="3.8" rx="0.9" fill="#fff" stroke="#f0913a" stroke-width="1.2"/><rect x="18.1" y="1.5" width="2.4" height="3.8" rx="0.9" fill="#fff" stroke="#f0913a" stroke-width="1.2"/><text x="11.6" y="15.9" text-anchor="middle" font-family="DejaVu Sans,sans-serif" font-size="6.4" fill="#666677">01/28</text></svg>
<svg style="left:1278px;top:123px" width="32" height="33" viewBox="0 0 32 33" ><rect x="1" y="4" width="30" height="26.8" rx="0.6" fill="#fff" stroke="#d6282c" stroke-width="1.8"/><rect x="3.8" y="0.95" width="3.4" height="5.2" rx="1" fill="#fff" stroke="#d6282c" stroke-width="1.3"/><rect x="14.400000000000002" y="0.95" width="3.4" height="5.2" rx="1" fill="#fff" stroke="#d6282c" stroke-width="1.3"/><rect x="24.8" y="0.95" width="3.4" height="5.2" rx="1" fill="#fff" stroke="#d6282c" stroke-width="1.3"/><text x="15.5" y="17.9" text-anchor="middle" font-family="DejaVu Sans,sans-serif" font-size="8.3" fill="#3c3c78">01/29</text><text x="15.5" y="27.8" text-anchor="middle" font-family="DejaVu Sans,sans-serif" font-size="8.3" fill="#3c3c78">2021</text></svg>
<svg style="left:2075.1px;top:319.7px" width="26" height="26" viewBox="0 0 26 26" ><defs><radialGradient id="sg1" cx="0.5" cy="0.3" r="0.75"><stop offset="0" stop-color="#fff65c"/><stop offset="0.42" stop-color="#fdd21f"/><stop offset="0.82" stop-color="#f4a30e"/><stop offset="1" stop-color="#e58a08"/></radialGradient><linearGradient id="tg1" x1="0" y1="0" x2="0" y2="1"><stop offset="0" stop-color="#ffffff"/><stop offset="1" stop-color="#d6d6d6"/></linearGradient></defs><circle cx="13" cy="13" r="11.4" fill="#fff" stroke="#b4b4b4" stroke-width="1.2"/><g transform="translate(13.30,12.65) scale(1.0000)"><circle cx="0" cy="0" r="8.75" fill="url(#sg1)"/><ellipse cx="-2.6" cy="-1.9" rx="1.0" ry="1.4" fill="#96480a"/><ellipse cx="2.6" cy="-1.9" rx="1.0" ry="1.4" fill="#96480a"/><path d="M-6.1 1.5 Q0 2.6 6.0 1.4 Q5.6 6.7 0 6.8 Q-5.6 6.7 -6.1 1.5 Z" fill="#a35a06"/><path d="M-5.8 1.9 Q0 3.0 5.7 1.8 Q5.4 3.2 4.6 3.6 Q0 4.4 -4.6 3.6 Q-5.4 3.2 -5.8 1.9 Z" fill="url(#tg1)"/></g></svg>
<svg style="left:2075.1px;top:354.7px" width="26" height="26" viewBox="0 0 26 26" ><defs><radialGradient id="sg2" cx="0.5" cy="0.3" r="0.75"><stop offset="0" stop-color="#fff65c"/><stop offset="0.42" stop-color="#fdd21f"/><stop offset="0.82" stop-color="#f4a30e"/><stop offset="1" stop-color="#e58a08"/></radialGradient><linearGradient id="tg2" x1="0" y1="0" x2="0" y2="1"><stop offset="0" stop-color="#ffffff"/><stop offset="1" stop-color="#d6d6d6"/></linearGradient></defs><circle cx="13" cy="13" r="11.4" fill="#fff" stroke="#b4b4b4" stroke-width="1.2"/><g transform="translate(13.30,12.65) scale(1.0000)"><circle cx="0" cy="0" r="8.75" fill="url(#sg2)"/><ellipse cx="-2.6" cy="-1.9" rx="1.0" ry="1.4" fill="#96480a"/><ellipse cx="2.6" cy="-1.9" rx="1.0" ry="1.4" fill="#96480a"/><path d="M-6.1 1.5 Q0 2.6 6.0 1.4 Q5.6 6.7 0 6.8 Q-5.6 6.7 -6.1 1.5 Z" fill="#a35a06"/><path d="M-5.8 1.9 Q0 3.0 5.7 1.8 Q5.4 3.2 4.6 3.6 Q0 4.4 -4.6 3.6 Q-5.4 3.2 -5.8 1.9 Z" fill="url(#tg2)"/></g></svg>
<svg style="left:2075.1px;top:389.7px" width="26" height="26" viewBox="0 0 26 26" ><defs><radialGradient id="sg3" cx="0.5" cy="0.3" r="0.75"><stop offset="0" stop-color="#fff65c"/><stop offset="0.42" stop-color="#fdd21f"/><stop offset="0.82" stop-color="#f4a30e"/><stop offset="1" stop-color="#e58a08"/></radialGradient><linearGradient id="tg3" x1="0" y1="0" x2="0" y2="1"><stop offset="0" stop-color="#ffffff"/><stop offset="1" stop-color="#d6d6d6"/></linearGradient></defs><circle cx="13" cy="13" r="11.4" fill="#fff" stroke="#b4b4b4" stroke-width="1.2"/><g transform="translate(13.30,12.65) scale(1.0000)"><circle cx="0" cy="0" r="8.75" fill="url(#sg3)"/><ellipse cx="-2.6" cy="-1.9" rx="1.0" ry="1.4" fill="#96480a"/><ellipse cx="2.6" cy="-1.9" rx="1.0" ry="1.4" fill="#96480a"/><path d="M-6.1 1.5 Q0 2.6 6.0 1.4 Q5.6 6.7 0 6.8 Q-5.6 6.7 -6.1 1.5 Z" fill="#a35a06"/><path d="M-5.8 1.9 Q0 3.0 5.7 1.8 Q5.4 3.2 4.6 3.6 Q0 4.4 -4.6 3.6 Q-5.4 3.2 -5.8 1.9 Z" fill="url(#tg3)"/></g></svg>
<svg style="left:2246px;top:503px" width="26" height="26" viewBox="0 0 26 26" ><defs><radialGradient id="sg4" cx="0.5" cy="0.3" r="0.75"><stop offset="0" stop-color="#fff65c"/><stop offset="0.42" stop-color="#fdd21f"/><stop offset="0.82" stop-color="#f4a30e"/><stop offset="1" stop-color="#e58a08"/></radialGradient><linearGradient id="tg4" x1="0" y1="0" x2="0" y2="1"><stop offset="0" stop-color="#ffffff"/><stop offset="1" stop-color="#d6d6d6"/></linearGradient></defs><circle cx="13" cy="13" r="11.4" fill="#fff" stroke="#b4b4b4" stroke-width="1.2"/><g transform="translate(13.30,12.65) scale(1.0000)"><circle cx="0" cy="0" r="8.75" fill="url(#sg4)"/><ellipse cx="-2.6" cy="-1.9" rx="1.0" ry="1.4" fill="#96480a"/><ellipse cx="2.6" cy="-1.9" rx="1.0" ry="1.4" fill="#96480a"/><path d="M-6.1 1.5 Q0 2.6 6.0 1.4 Q5.6 6.7 0 6.8 Q-5.6 6.7 -6.1 1.5 Z" fill="#a35a06"/><path d="M-5.8 1.9 Q0 3.0 5.7 1.8 Q5.4 3.2 4.6 3.6 Q0 4.4 -4.6 3.6 Q-5.4 3.2 -5.8 1.9 Z" fill="url(#tg4)"/></g></svg>
<svg style="left:1311.9px;top:121.9px" width="36.0" height="36.0" viewBox="0 0 36.0 36.0" ><defs><radialGradient id="sg5" cx="0.5" cy="0.3" r="0.75"><stop offset="0" stop-color="#fff65c"/><stop offset="0.42" stop-color="#fdd21f"/><stop offset="0.82" stop-color="#f4a30e"/><stop offset="1" stop-color="#e58a08"/></radialGradient><linearGradient id="tg5" x1="0" y1="0" x2="0" y2="1"><stop offset="0" stop-color="#ffffff"/><stop offset="1" stop-color="#d6d6d6"/></linearGradient></defs><circle cx="18.0" cy="18.0" r="16.4" fill="#fff" stroke="#b4b4b4" stroke-width="1.2"/><g transform="translate(18.43,17.50) scale(1.4400)"><circle cx="0" cy="0" r="8.75" fill="url(#sg5)"/><ellipse cx="-2.6" cy="-1.9" rx="1.0" ry="1.4" fill="#96480a"/><ellipse cx="2.6" cy="-1.9" rx="1.0" ry="1.4" fill="#96480a"/><path d="M-6.1 1.5 Q0 2.6 6.0 1.4 Q5.6 6.7 0 6.8 Q-5.6 6.7 -6.1 1.5 Z" fill="#a35a06"/><path d="M-5.8 1.9 Q0 3.0 5.7 1.8 Q5.4 3.2 4.6 3.6 Q0 4.4 -4.6 3.6 Q-5.4 3.2 -5.8 1.9 Z" fill="url(#tg5)"/></g></svg>
<!--/ICONS-->
</body>
</html>
